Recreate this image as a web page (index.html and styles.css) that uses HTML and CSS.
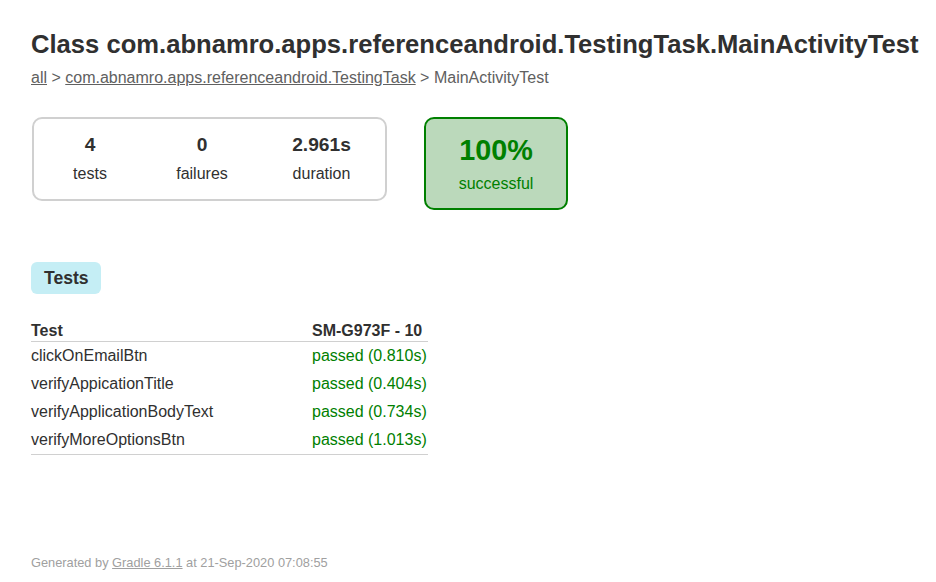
FILE: index.html
```html
<!DOCTYPE html>
<html>
<head>
<meta charset="utf-8">
<title>Test results - Class com.abnamro.apps.referenceandroid.TestingTask.MainActivityTest</title>
<link rel="stylesheet" href="styles.css">
</head>
<body>
<div class="content">
  <h1 class="title">Class com.abnamro.apps.referenceandroid.TestingTask.MainActivityTest</h1>
  <div class="breadcrumbs"><a href="#">all</a> &gt; <a href="#">com.abnamro.apps.referenceandroid.TestingTask</a> &gt; MainActivityTest</div>

  <div class="summary">
    <div class="summary-group">
      <div class="info-box">
        <div class="counter">4</div>
        <p>tests</p>
      </div>
      <div class="info-box">
        <div class="counter">0</div>
        <p>failures</p>
      </div>
      <div class="info-box duration">
        <div class="counter">2.961s</div>
        <p>duration</p>
      </div>
    </div>
    <div class="success-rate">
      <div class="percent">100%</div>
      <p>successful</p>
    </div>
  </div>

  <div class="tabs">
    <span class="tab-link">Tests</span>
  </div>

  <table class="results">
    <thead>
      <tr><th class="col-test">Test</th><th>SM-G973F - 10</th></tr>
    </thead>
    <tbody>
      <tr><td>clickOnEmailBtn</td><td class="success">passed (0.810s)</td></tr>
      <tr><td>verifyAppicationTitle</td><td class="success">passed (0.404s)</td></tr>
      <tr><td>verifyApplicationBodyText</td><td class="success">passed (0.734s)</td></tr>
      <tr><td>verifyMoreOptionsBtn</td><td class="success">passed (1.013s)</td></tr>
    </tbody>
  </table>

  <div class="footer">Generated by <a href="#">Gradle 6.1.1</a> at 21-Sep-2020 07:08:55</div>
</div>
</body>
</html>
```

FILE: styles.css
```css
html, body {
  margin: 0;
  padding: 0;
  background: #ffffff;
}
body {
  font-family: "Liberation Sans", Arial, sans-serif;
  font-size: 16px;
  color: #303030;
}
a, a:visited {
  color: #606060;
}
.content {
  padding: 30px 31px 0;
}
.title {
  font-size: 25.6px;
  font-weight: bold;
  margin: 0 0 10px 0;
  line-height: 29px;
  white-space: nowrap;
}
.breadcrumbs {
  color: #606060;
  line-height: 18px;
  white-space: nowrap;
}
.summary {
  display: flex;
  align-items: flex-start;
  margin-top: 30px;
}
.summary-group {
  display: flex;
  border: 2px solid #d0d0d0;
  border-radius: 10px;
  margin-left: 1px;
}
.info-box {
  width: 112px;
  padding: 15px 0 16px;
  text-align: center;
}
.info-box.duration {
  width: 127px;
}
.info-box p, .success-rate p {
  margin: 0;
  line-height: 18px;
}
.counter {
  font-size: 19.2px;
  font-weight: bold;
  line-height: 22px;
  margin-bottom: 9px;
}
.success-rate {
  width: 140px;
  margin-left: 37px;
  border: 2px solid #008000;
  border-radius: 10px;
  background: #bbd9bb;
  color: #008000;
  text-align: center;
  padding: 15px 0 15px;
}
.success-rate .percent {
  margin-bottom: 8px;
}
.percent {
  font-size: 28.8px;
  font-weight: bold;
  line-height: 33px;
}
.tabs {
  margin-top: 52px;
  display: flex;
}
.tab-link {
  background: #c5eef5;
  border-radius: 6px;
  font-weight: bold;
  font-size: 17.6px;
  line-height: 20px;
  padding: 6px 12px 6px 13px;
}
.results {
  border-collapse: collapse;
  margin-top: 26px;
}
.results th, .results td {
  padding: 0 1px 0 0;
  text-align: left;
  white-space: nowrap;
  height: 28px;
}
.results th {
  font-weight: bold;
  height: 20px;
  line-height: 18px;
  vertical-align: bottom;
  padding-bottom: 1px;
  border-bottom: 1px solid #d0d0d0;
}
.results .col-test {
  width: 280px;
}
.results tbody tr:last-child td {
  border-bottom: 1px solid #d0d0d0;
}
.success {
  color: #008000;
}
.footer {
  margin-top: 100px;
  font-size: 12.8px;
  color: #a0a0a0;
  white-space: nowrap;
}
.footer a {
  color: #a0a0a0;
}
```
